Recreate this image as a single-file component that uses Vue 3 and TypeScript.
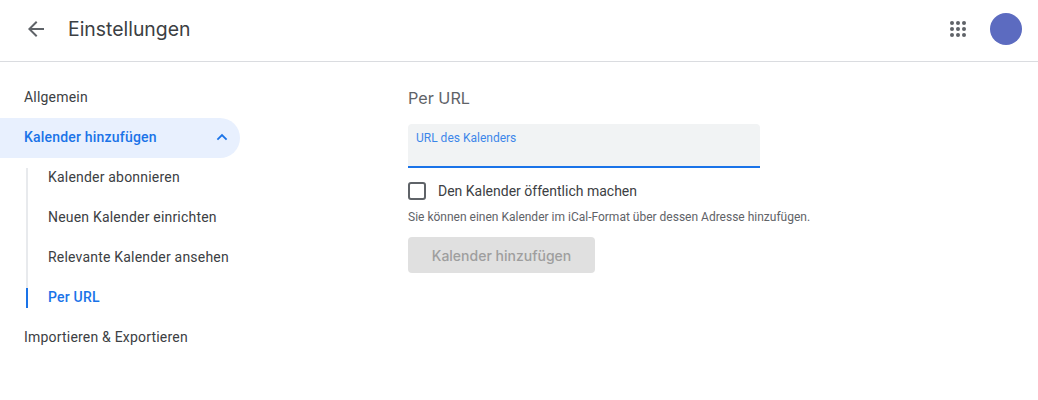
<script setup lang="ts">
const subItems = [
  { label: 'Kalender abonnieren', active: false },
  { label: 'Neuen Kalender einrichten', active: false },
  { label: 'Relevante Kalender ansehen', active: false },
  { label: 'Per URL', active: true },
]
const dots = [0, 1, 2].flatMap((y) => [0, 1, 2].map((x) => ({ cx: 2 + x * 6, cy: 2 + y * 6 })))
</script>

<template>
  <div class="page">
    <header class="topbar">
      <svg class="back" width="24" height="24" viewBox="0 0 24 24">
        <path d="M20 11H7.83l5.59-5.59L12 4l-8 8 8 8 1.41-1.41L7.83 13H20v-2z" fill="#5f6368" />
      </svg>
      <h1 class="title">Einstellungen</h1>
      <svg class="apps" width="16" height="16" viewBox="0 0 16 16">
        <circle v-for="d in dots" :key="`${d.cx}-${d.cy}`" :cx="d.cx" :cy="d.cy" r="2" fill="#5f6368" />
      </svg>
      <div class="avatar"></div>
    </header>

    <div class="body">
      <nav class="side">
        <div class="item">Allgemein</div>
        <div class="item open">
          <span>Kalender hinzufügen</span>
          <svg width="12" height="8" viewBox="0 0 12 8">
            <path d="M1.4 6.6 6 2l4.6 4.6" fill="none" stroke="#1a73e8" stroke-width="1.8" />
          </svg>
        </div>
        <div class="sub">
          <div v-for="s in subItems" :key="s.label" class="sub-item" :class="{ active: s.active }">{{ s.label }}</div>
        </div>
        <div class="item">Importieren &amp; Exportieren</div>
      </nav>

      <main class="content">
        <h2 class="heading">Per URL</h2>
        <div class="field">
          <span class="field-label">URL des Kalenders</span>
        </div>
        <label class="check">
          <span class="box"></span>
          <span>Den Kalender öffentlich machen</span>
        </label>
        <p class="hint">Sie können einen Kalender im iCal-Format über dessen Adresse hinzufügen.</p>
        <button class="add" disabled>Kalender hinzufügen</button>
      </main>
    </div>
  </div>
</template>

<style>
html, body { background: #fff; }
</style>

<style scoped>
.page { width: 1038px; height: 400px; overflow: hidden; font-family: Roboto, "Liberation Sans", sans-serif; color: #3c4043; }
.topbar { height: 62px; box-sizing: border-box; border-bottom: 1px solid #dadce0; display: flex; align-items: center; padding: 0 16px 3px 24px; }
.back { flex: none; }
.title { margin: 0 0 0 20px; font-size: 19.4px; font-weight: 400; font-family: Inter, Roboto, sans-serif; flex: 1; }
.apps { margin-right: 24px; }
.avatar { width: 32px; height: 32px; border-radius: 50%; background: #5c6bc0; }
.body { display: flex; padding-top: 15px; }
.side { width: 240px; flex: none; font-size: 14px; letter-spacing: 0.2px; }
.item { height: 40px; display: flex; align-items: center; justify-content: space-between; padding: 0 12px 0 24px; }
.item.open { box-sizing: border-box; margin: 1px 0 -1px; padding-bottom: 2px; background: #e8f0fe; color: #1a73e8; font-weight: 500; border-radius: 0 20px 20px 0; }
.sub { margin-left: 26px; }
.sub-item { position: relative; height: 40px; line-height: 40px; padding-left: 22px; }
.sub-item::before { content: ""; position: absolute; left: 0; top: 0; bottom: 0; width: 2px; background: #e8eaed; }
.sub-item:first-child::before { top: 11px; }
.sub-item.active { color: #1a73e8; font-weight: 500; }
.sub-item.active::before { background: #1a73e8; top: 11px; bottom: 9px; }
.sub-item.active::after { content: ""; position: absolute; left: 0; top: 0; height: 11px; width: 2px; background: #e8eaed; }
.content { margin-left: 168px; padding-top: 9px; }
.heading { margin: 0; font-size: 16.2px; line-height: 24px; font-weight: 400; font-family: Inter, Roboto, sans-serif; color: #5f6368; }
.field { width: 352px; height: 44px; margin-top: 14px; box-sizing: border-box; padding: 6px 8px 0; background: #f1f3f4; border-radius: 4px 4px 0 0; border-bottom: 2px solid #1a73e8; }
.field-label { font-size: 12px; line-height: 16px; color: #1a73e8; display: block; opacity: 0.85; }
.check { display: flex; align-items: center; gap: 12px; margin-top: 13px; font-size: 14px; height: 20px; }
.box { flex: none; width: 14px; height: 14px; border: 2px solid #5f6368; border-radius: 3px; }
.hint { margin: 8px 0 0; font-size: 12px; line-height: 16px; color: #5f6368; }
.add { display: block; margin-top: 12px; width: 187px; height: 36px; border: 0; border-radius: 4px; background: #e0e0e0; color: #9e9e9e; font: 500 14px Inter, Roboto, sans-serif; }
</style>
